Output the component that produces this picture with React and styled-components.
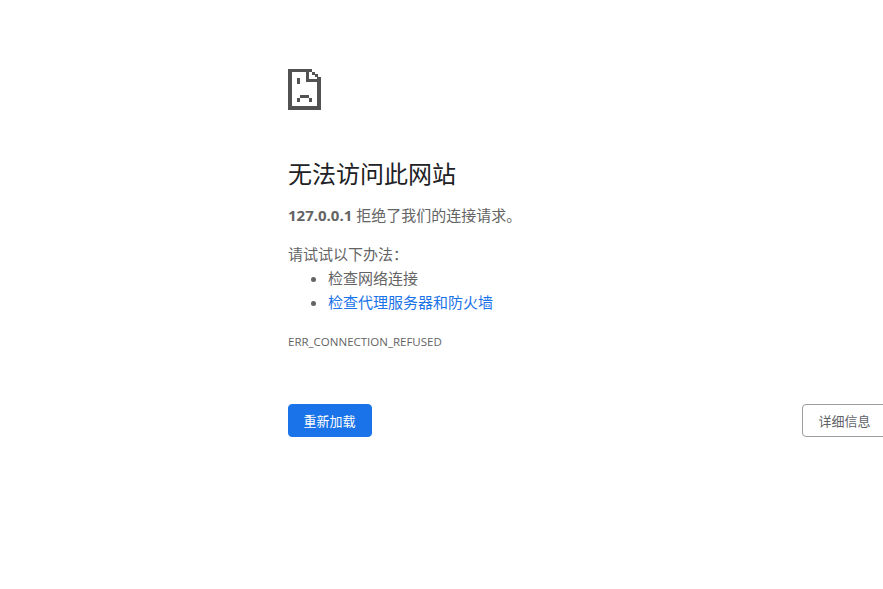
import React from 'react'
import styled, { createGlobalStyle } from 'styled-components'

const GlobalStyle = createGlobalStyle`
  html, body {
    margin: 0;
    padding: 0;
    background: #fff;
    overflow: hidden;
  }
  body {
    font-family: "Open Sans", "Noto Sans CJK SC", sans-serif;
    font-size: 15px;
    color: #646464;
  }
`

const Page = styled.div`
  height: 589px;
  padding: 69px 0 0 288px;
  box-sizing: border-box;
  overflow: hidden;
`

const Wrapper = styled.div`
  width: 600px;
`

const IconSlot = styled.div`
  height: 41px;
  margin-bottom: 46px;
`

const Heading = styled.h1`
  margin: 0 0 11px;
  font-size: 24px;
  font-weight: 400;
  line-height: 36px;
  color: #202124;
`

const Message = styled.p`
  margin: 0 0 15px;
  line-height: 24px;
  height: 24px;
`

const Strong = styled.strong`
  font-weight: 700;
`

const Hint = styled.p`
  margin: 0;
  line-height: 24px;
`

const Suggestions = styled.ul`
  margin: 0;
  padding-left: 40px;
  line-height: 24px;
`

const Suggestion = styled.li`
  margin: 0;
`

const SuggestionLink = styled.a`
  color: #1a73e8;
  text-decoration: none;
`

const ErrorCode = styled.div`
  margin-top: 19px;
  font-size: 11.5px;
  line-height: 18px;
  color: #646464;
`

const Buttons = styled.div`
  display: flex;
  justify-content: space-between;
  margin-top: 53px;
`

const Button = styled.button`
  height: 33px;
  width: ${p => (p.$primary ? '84px' : '86px')};
  padding: 0 1px 0 0;
  box-sizing: border-box;
  border-radius: 4px;
  border: 1px solid ${p => (p.$primary ? '#1a73e8' : '#9e9e9e')};
  background: ${p => (p.$primary ? '#1a73e8' : '#fff')};
  color: ${p => (p.$primary ? '#fff' : '#5f6368')};
  font-family: inherit;
  font-size: 13px;
  cursor: pointer;
`

const SadFile = () => (
  <svg width="33" height="41" viewBox="0 0 33 41" fill="#525252" shapeRendering="crispEdges">
    <rect x="0" y="0" width="24" height="3" />
    <rect x="0" y="0" width="4" height="41" />
    <rect x="0" y="37" width="33" height="4" />
    <rect x="29" y="8" width="4" height="33" />
    <rect x="18" y="0" width="3" height="13" />
    <rect x="18" y="10" width="12" height="3" />
    <rect x="24" y="3" width="3" height="3" />
    <rect x="27" y="5" width="3" height="3" />
    <rect x="9" y="9" width="3" height="6" />
    <rect x="12" y="26" width="9" height="3" />
    <rect x="9" y="29" width="3" height="4" />
    <rect x="21" y="29" width="3" height="4" />
  </svg>
)

const App = () => {
  return (
    <Page>
      <GlobalStyle />
      <Wrapper>
        <IconSlot>
          <SadFile />
        </IconSlot>
        <Heading>无法访问此网站</Heading>
        <Message><Strong>127.0.0.1</Strong> 拒绝了我们的连接请求。</Message>
        <Hint>请试试以下办法：</Hint>
        <Suggestions>
          <Suggestion>检查网络连接</Suggestion>
          <Suggestion><SuggestionLink href="#">检查代理服务器和防火墙</SuggestionLink></Suggestion>
        </Suggestions>
        <ErrorCode>ERR_CONNECTION_REFUSED</ErrorCode>
        <Buttons>
          <Button $primary>重新加载</Button>
          <Button>详细信息</Button>
        </Buttons>
      </Wrapper>
    </Page>
  )
}

export default App
